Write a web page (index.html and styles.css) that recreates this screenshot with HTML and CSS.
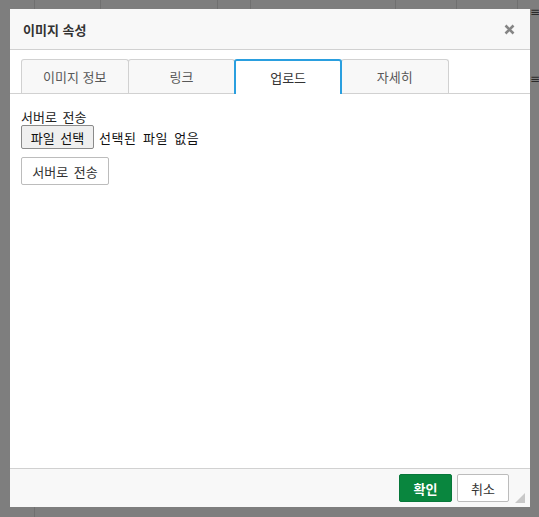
FILE: index.html
```html
<!DOCTYPE html>
<html lang="ko">
<head>
<meta charset="utf-8">
<title>이미지 속성</title>
<link rel="stylesheet" href="styles.css">
</head>
<body>
<div class="backdrop">
  <div class="toolbar">
    <span class="sep s1"></span><span class="sep s2"></span><span class="sep s3"></span><span class="sep s4"></span><span class="sep s5"></span><span class="sep s6"></span><span class="sep s7"></span>
  </div>
  <div class="vline"></div>
  <div class="side-icon i1">≡</div>
  <div class="side-icon i2">≡</div>

  <div class="dialog">
    <div class="titlebar">
      <span class="title">이미지 속성</span>
      <svg class="close" width="11" height="11" viewBox="0 0 11 11" aria-label="닫기">
        <path d="M1.5 1.5 L9.5 9.5 M9.5 1.5 L1.5 9.5" stroke="#858585" stroke-width="2.6" stroke-linecap="butt" fill="none"/>
      </svg>
    </div>
    <div class="tabs">
      <div class="tab">이미지 정보</div>
      <div class="tab">링크</div>
      <div class="tab active">업로드</div>
      <div class="tab">자세히</div>
    </div>
    <div class="body">
      <div class="label">서버로 전송</div>
      <div class="file-row">
        <span class="file-btn">파일 선택</span>
        <span class="file-name">선택된 파일 없음</span>
      </div>
      <button class="send-btn">서버로 전송</button>
    </div>
    <div class="footer">
      <button class="btn ok">확인</button>
      <button class="btn cancel">취소</button>
      <span class="resize"></span>
    </div>
  </div>
</div>
</body>
</html>
```

FILE: styles.css
```css
* { box-sizing: border-box; }
html, body {
  margin: 0;
  padding: 0;
  width: 539px;
  height: 517px;
  overflow: hidden;
}
body {
  background: #7e7e7e;
  font-family: "Noto Sans CJK KR", "Noto Sans", sans-serif;
  font-size: 13px;
  color: #333;
}
.backdrop {
  position: relative;
  width: 539px;
  height: 517px;
}
.toolbar {
  height: 10px;
  position: relative;
}
.sep {
  position: absolute;
  top: 0;
  width: 1px;
  height: 10px;
  background: #707070;
}
.s1 { left: 34px; } .s2 { left: 100px; } .s3 { left: 217px; } .s4 { left: 250px; }
.s5 { left: 395px; } .s6 { left: 456px; } .s7 { left: 517px; }
.vline {
  position: absolute;
  left: 34px;
  top: 506px;
  width: 1px;
  height: 11px;
  background: #707070;
}
.side-icon {
  position: absolute;
  left: 530px;
  font-size: 12px;
  line-height: 12px;
  color: #2a2a2a;
  font-family: "DejaVu Sans", sans-serif;
}
.i1 { top: 6px; }
.i2 { top: 73px; }

.dialog {
  position: absolute;
  left: 10px;
  top: 9px;
  width: 520px;
  height: 498px;
  background: #fff;
  display: flex;
  flex-direction: column;
}
.titlebar {
  height: 41px;
  background: #f8f8f8;
  border-bottom: 1px solid #d1d1d1;
  display: flex;
  align-items: center;
  justify-content: space-between;
  padding: 0 15px 0 13px;
}
.title {
  font-weight: bold;
  font-size: 13px;
  color: #333;
}
.close {
  display: block;
  margin-top: 1px;
}
.tabs {
  display: flex;
  padding: 9px 0 0 11px;
  border-bottom: 1px solid #d1d1d1;
  height: 44px;
}
.tab {
  flex: none;
  width: 107.67px;
  height: 34px;
  margin-bottom: -1px;
  border: 1px solid #d1d1d1;
  border-bottom: none;
  border-radius: 3px 3px 0 0;
  background: #f8f8f8;
  color: #595959;
  display: flex;
  align-items: center;
  justify-content: center;
  font-size: 13px;
}
.tab + .tab { margin-left: -1px; }
.tab.active {
  background: #fff;
  border: 2px solid #2a9fdf;
  border-bottom: none;
  height: 35px;
  color: #333;
  position: relative;
  z-index: 1;
}
.body {
  flex: 1;
  padding: 14px 0 0 11px;
}
.label {
  line-height: 18px;
  height: 18px;
  color: #222;
  word-spacing: 2px;
}
.file-row {
  display: flex;
  align-items: center;
  height: 24px;
  margin-top: -1px;
}
.file-btn {
  display: inline-flex;
  align-items: center;
  justify-content: center;
  width: 73px;
  height: 24px;
  background: #efefef;
  border: 1px solid #8a8a8a;
  border-radius: 2px;
  color: #111;
  font-size: 13px;
  word-spacing: 2px;
}
.file-name {
  margin-left: 5px;
  color: #111;
  letter-spacing: 0.6px;
  word-spacing: 2px;
}
.send-btn {
  display: block;
  margin-top: 8px;
  width: 88px;
  height: 28px;
  background: #fff;
  border: 1px solid #bcbcbc;
  border-radius: 2px;
  font-family: inherit;
  font-size: 13px;
  color: #333;
  padding: 0;
  word-spacing: 2px;
}
.footer {
  height: 39px;
  background: #f8f8f8;
  border-top: 1px solid #d1d1d1;
  display: flex;
  align-items: flex-start;
  justify-content: flex-end;
  padding: 5px 0 0 0;
  position: relative;
}
.btn {
  height: 28px;
  font-family: inherit;
  font-size: 13px;
  border-radius: 2px;
  padding: 0;
}
.ok {
  width: 53px;
  background: #09863e;
  border: 1px solid #07773a;
  color: #fff;
  font-weight: bold;
}
.cancel {
  width: 52px;
  margin-left: 5px;
  margin-right: 21px;
  background: #fff;
  border: 1px solid #bcbcbc;
  color: #333;
}
.resize {
  position: absolute;
  right: 5px;
  bottom: 4px;
  width: 0;
  height: 0;
  border-left: 10px solid transparent;
  border-bottom: 10px solid #c8c8c8;
}
```
